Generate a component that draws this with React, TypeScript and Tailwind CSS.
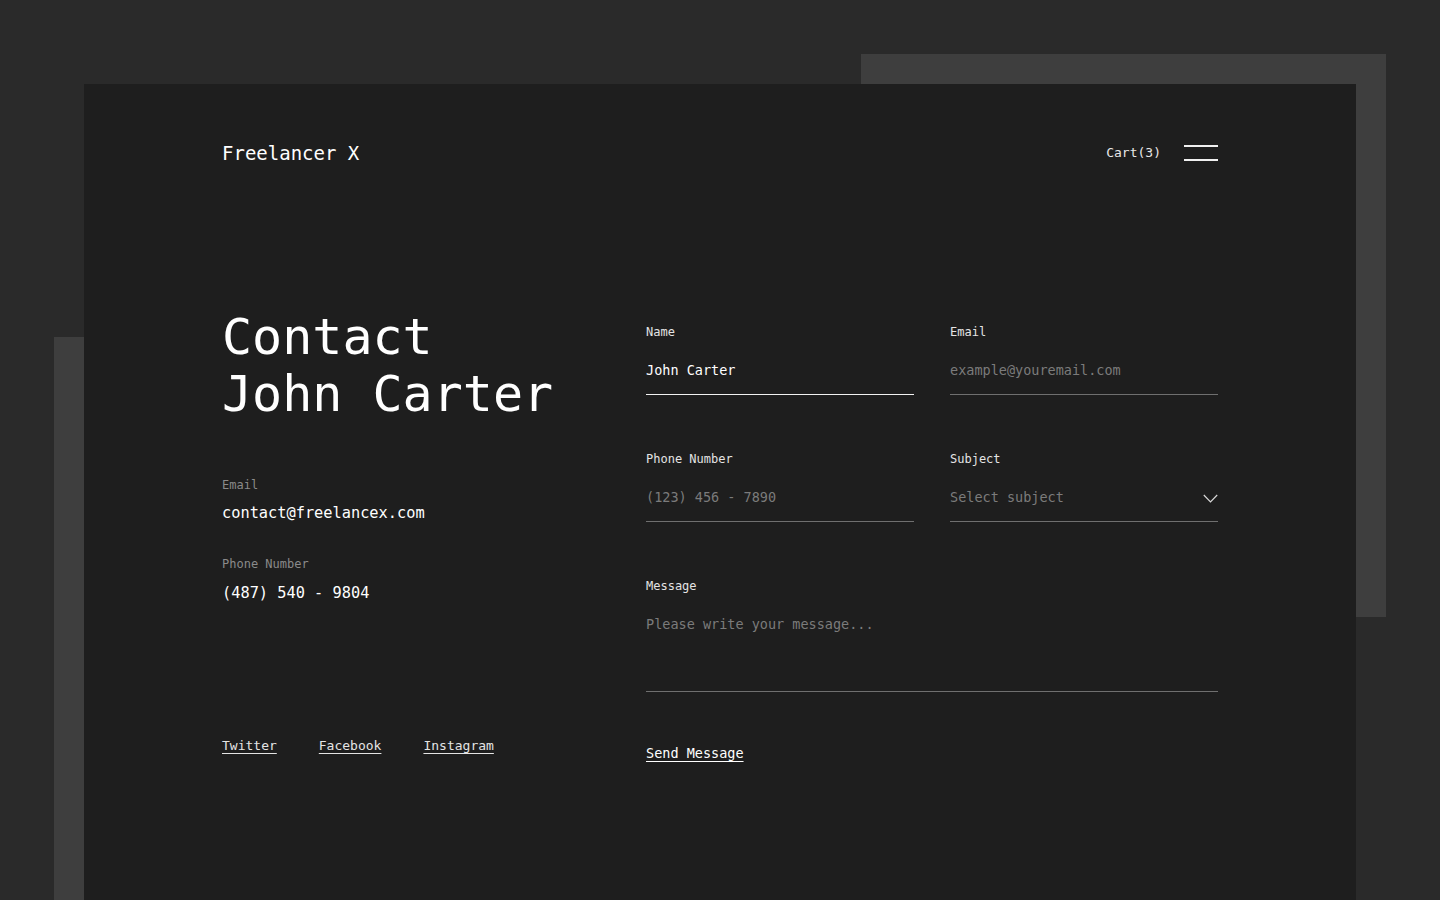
const mono = { fontFamily: '"DejaVu Sans Mono", "Liberation Mono", monospace' };

function Field({
  label,
  placeholder,
  value,
  active,
}: {
  label: string;
  placeholder?: string;
  value?: string;
  active?: boolean;
}) {
  return (
    <div className="flex flex-col">
      <label className="text-[12px] leading-4 text-[#e4e4e4]">{label}</label>
      <input
        type="text"
        defaultValue={value}
        placeholder={placeholder}
        style={mono}
        className={`mt-[7px] h-[48px] w-full bg-transparent pb-[1px] text-[13.5px] text-white placeholder-[#7b7b7b] outline-none border-b ${
          active ? 'border-[#f2f2f2]' : 'border-[#6f6f6f]'
        }`}
      />
    </div>
  );
}

export default function App() {
  return (
    <div style={mono} className="relative h-[900px] w-full overflow-hidden bg-[#2a2a2a] text-white">
      {/* decorative blocks behind the card */}
      <div className="absolute left-[861px] top-[54px] h-[563px] w-[525px] bg-[#3e3e3e]" />
      <div className="absolute left-[54px] top-[337px] h-[563px] w-[100px] bg-[#3e3e3e]" />

      <div className="relative z-10 ml-[84px] mt-[84px] h-[816px] w-[1272px] bg-[#1e1e1e] px-[138px] pt-[57px]">
        {/* header */}
        <header className="flex h-6 items-center justify-between">
          <div className="text-[19px] leading-6 text-white">Freelancer X</div>
          <div className="flex items-center gap-[23px]">
            <span className="text-[13px] leading-5 text-[#e8e8e8]">Cart(3)</span>
            <div className="flex w-[34px] flex-col gap-[12.5px]">
              <span className="block h-[1.5px] w-full bg-[#f0f0f0]" />
              <span className="block h-[1.5px] w-full bg-[#f0f0f0]" />
            </div>
          </div>
        </header>

        <div className="mt-[143px] flex">
          {/* left column */}
          <div className="w-[424px] shrink-0">
            <h1 className="pt-[1px] text-[50px] font-normal leading-[57px] text-white">
              Contact
              <br />
              John Carter
            </h1>

            <div className="mt-[54px] text-[12px] leading-4 text-[#8a8a8a]">Email</div>
            <div className="mt-[9px] text-[15.3px] leading-[22px] text-white">contact@freelancex.com</div>

            <div className="mt-[32px] text-[12px] leading-4 text-[#8a8a8a]">Phone Number</div>
            <div className="mt-[10px] text-[15.3px] leading-[22px] text-white">(487) 540 - 9804</div>

            <div className="mt-[132px] flex gap-[42px] text-[13px] leading-5 text-[#e4e4e4]">
              <a href="#" className="underline underline-offset-[3px]">Twitter</a>
              <a href="#" className="underline underline-offset-[3px]">Facebook</a>
              <a href="#" className="underline underline-offset-[3px]">Instagram</a>
            </div>
          </div>

          {/* form */}
          <form className="w-[572px] pt-4" onSubmit={(e) => e.preventDefault()}>
            <div className="grid grid-cols-2 gap-x-[36px] gap-y-[56px]">
              <Field label="Name" value="John Carter" active />
              <Field label="Email" placeholder="example@youremail.com" />
              <Field label="Phone Number" placeholder="(123) 456 - 7890" />
              <div className="flex flex-col">
                <label className="text-[12px] leading-4 text-[#e4e4e4]">Subject</label>
                <div className="relative mt-[7px] h-[48px] border-b border-[#6f6f6f]">
                  <select
                    style={mono}
                    defaultValue=""
                    className="h-full w-full appearance-none bg-transparent pb-[1px] text-[13.5px] text-[#7b7b7b] outline-none"
                  >
                    <option value="" disabled>
                      Select subject
                    </option>
                    <option value="project">Project</option>
                    <option value="other">Other</option>
                  </select>
                  <svg
                    className="pointer-events-none absolute right-0 top-[20px] h-[9px] w-[15px]"
                    viewBox="0 0 15 9"
                    fill="none"
                    stroke="#d8d8d8"
                    strokeWidth="1.2"
                  >
                    <path d="M0.8 1 L7.5 8 L14.2 1" />
                  </svg>
                </div>
              </div>
              <div className="col-span-2 flex flex-col">
                <label className="text-[12px] leading-4 text-[#e4e4e4]">Message</label>
                <textarea
                  style={mono}
                  placeholder="Please write your message..."
                  className="mt-[7px] h-[91px] w-full resize-none border-b border-[#6f6f6f] bg-transparent pt-[13px] text-[13.5px] leading-5 text-white placeholder-[#7b7b7b] outline-none"
                />
              </div>
            </div>
            <button
              type="submit"
              className="mt-[51px] text-[13.5px] leading-5 text-white underline underline-offset-[3px]"
            >
              Send Message
            </button>
          </form>
        </div>
      </div>
    </div>
  );
}
